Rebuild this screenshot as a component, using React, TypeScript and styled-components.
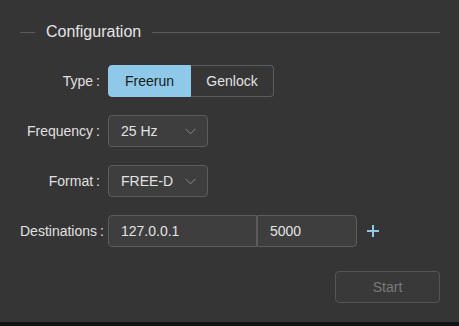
import { useState } from 'react';
import styled, { createGlobalStyle } from 'styled-components';

const GlobalStyle = createGlobalStyle`
  html, body {
    margin: 0;
    padding: 0;
    background: #101417;
  }
  body {
    font-family: "Liberation Sans", Arial, sans-serif;
  }
`;

const Panel = styled.div`
  box-sizing: border-box;
  width: 459px;
  height: 322px;
  padding: 20px 19px 0 20px;
  background: #353535;
  color: #e2e2e2;
`;

const Header = styled.div`
  display: flex;
  align-items: center;
  gap: 11px;
  height: 24px;
`;

const Rule = styled.span<{ $grow?: boolean }>`
  display: block;
  height: 1px;
  background: #5b5b5b;
  width: ${({ $grow }) => ($grow ? 'auto' : '15px')};
  flex: ${({ $grow }) => ($grow ? '1' : 'none')};
`;

const Title = styled.span`
  font-size: 16px;
  color: #e4e4e4;
  line-height: 24px;
`;

const Form = styled.div`
  display: flex;
  flex-direction: column;
  gap: 18px;
  margin-top: 21px;
`;

const Row = styled.div`
  display: grid;
  grid-template-columns: 80px auto;
  column-gap: 8px;
  align-items: center;
  height: 32px;
`;

const Label = styled.label`
  font-size: 14px;
  text-align: right;
  color: #e0e0e0;
  white-space: nowrap;
  &::after {
    content: ':';
    margin-left: 3px;
  }
`;

const Controls = styled.div`
  display: flex;
  align-items: center;
`;

const Segment = styled.button<{ $active: boolean; $pos: 'first' | 'last' }>`
  box-sizing: border-box;
  width: 83px;
  height: 32px;
  font-family: inherit;
  font-size: 14px;
  cursor: pointer;
  border: 1px solid ${({ $active }) => ($active ? '#8fc9e9' : '#5c5c5c')};
  background: ${({ $active }) => ($active ? '#8fc9e9' : '#363636')};
  color: ${({ $active }) => ($active ? '#1b1b1b' : '#e2e2e2')};
  border-radius: ${({ $pos }) => ($pos === 'first' ? '4px 0 0 4px' : '0 4px 4px 0')};
  ${({ $pos }) => ($pos === 'last' ? 'border-left: none;' : '')}
`;

const Select = styled.div`
  box-sizing: border-box;
  width: 100px;
  height: 32px;
  display: flex;
  align-items: center;
  justify-content: space-between;
  padding: 0 11px 0 12px;
  border: 1px solid #5c5c5c;
  border-radius: 4px;
  background: #3e3e3e;
  font-size: 14px;
  color: #e2e2e2;
`;

const Input = styled.input<{ $w: number; $side: 'left' | 'right' }>`
  box-sizing: border-box;
  width: ${({ $w }) => $w}px;
  height: 32px;
  padding: 0 12px;
  border: 1px solid #5c5c5c;
  background: #3e3e3e;
  color: #e2e2e2;
  font-family: inherit;
  font-size: 14px;
  outline: none;
  border-radius: ${({ $side }) => ($side === 'left' ? '4px 0 0 4px' : '0 4px 4px 0')};
`;

const AddButton = styled.button`
  display: flex;
  align-items: center;
  justify-content: center;
  margin-left: 8px;
  width: 16px;
  height: 16px;
  padding: 0;
  border: none;
  background: transparent;
  cursor: pointer;
`;

const Footer = styled.div`
  display: flex;
  justify-content: flex-end;
  margin-top: 24px;
`;

const StartButton = styled.button`
  box-sizing: border-box;
  width: 105px;
  height: 32px;
  border: 1px solid #555555;
  border-radius: 4px;
  background: #393939;
  color: #7a7a7a;
  font-family: inherit;
  font-size: 14px;
`;

const Chevron = () => (
  <svg width="11" height="7" viewBox="0 0 11 7">
    <path d="M0.5 0.8 L5.5 5.8 L10.5 0.8" fill="none" stroke="#8a8a8a" strokeWidth="1" />
  </svg>
);

export default function App() {
  const [type, setType] = useState<'Freerun' | 'Genlock'>('Freerun');

  return (
    <>
      <GlobalStyle />
      <Panel>
        <Header>
          <Rule />
          <Title>Configuration</Title>
          <Rule $grow />
        </Header>
        <Form>
          <Row>
            <Label>Type</Label>
            <Controls>
              <Segment $pos="first" $active={type === 'Freerun'} onClick={() => setType('Freerun')}>
                Freerun
              </Segment>
              <Segment $pos="last" $active={type === 'Genlock'} onClick={() => setType('Genlock')}>
                Genlock
              </Segment>
            </Controls>
          </Row>
          <Row>
            <Label>Frequency</Label>
            <Controls>
              <Select>
                <span>25 Hz</span>
                <Chevron />
              </Select>
            </Controls>
          </Row>
          <Row>
            <Label>Format</Label>
            <Controls>
              <Select>
                <span>FREE-D</span>
                <Chevron />
              </Select>
            </Controls>
          </Row>
          <Row>
            <Label>Destinations</Label>
            <Controls>
              <Input $w={149} $side="left" defaultValue="127.0.0.1" />
              <Input $w={100} $side="right" defaultValue="5000" />
              <AddButton aria-label="add destination">
                <svg width="14" height="14" viewBox="0 0 14 14">
                  <path d="M7 1 V13 M1 7 H13" stroke="#8fc9e9" strokeWidth="2" />
                </svg>
              </AddButton>
            </Controls>
          </Row>
        </Form>
        <Footer>
          <StartButton disabled>Start</StartButton>
        </Footer>
      </Panel>
    </>
  );
}
